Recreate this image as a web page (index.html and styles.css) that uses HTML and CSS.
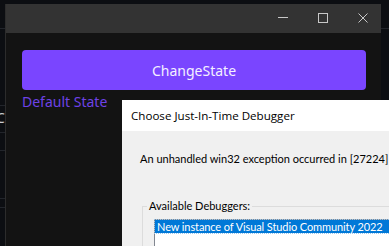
FILE: index.html
```html
<!DOCTYPE html>
<html>
<head>
  <meta charset="utf-8">
  <title>ChangeState</title>
  <link rel="stylesheet" href="styles.css">
</head>
<body>
  <div id="desktop">
    <div class="edge edge-left">
      <div class="rule r1"></div>
      <div class="rule r2"></div>
      <div class="edge-char">C</div>
      <div class="rule r3"></div>
      <div class="rule r4"></div>
      <div class="rule r5"></div>
      <div class="rule r6"></div>
    </div>
    <div id="app">
      <div class="titlebar">
        <svg class="ctl" width="46" height="29" viewBox="0 0 46 29"><path d="M28 13.5h10" stroke="#c8c8c8" stroke-width="1"/></svg>
        <svg class="ctl" width="40" height="29" viewBox="0 0 40 29"><rect x="22.5" y="9.5" width="9" height="9" fill="none" stroke="#c8c8c8" stroke-width="1"/></svg>
        <svg class="ctl" width="45" height="29" viewBox="0 0 45 29"><path d="M22.5 9.5l9 9M31.5 9.5l-9 9" stroke="#c8c8c8" stroke-width="1"/></svg>
      </div>
      <div class="content">
        <button class="primary">ChangeState</button>
        <div class="state">Default State</div>
      </div>
    </div>
    <div class="edge edge-right">
      <div class="rule r1"></div>
    </div>
  </div>

  <div id="jit">
    <div class="jit-title">Choose Just-In-Time Debugger</div>
    <div class="jit-body">
      <div class="jit-msg">An unhandled win32 exception occurred in [27224] <span class="proc">TestApp.exe</span></div>
      <fieldset class="group">
        <legend>Available Debuggers:</legend>
        <div class="listbox">
          <div class="item selected">New instance of Visual Studio Community 2022</div>
          <div class="item">&nbsp;</div>
        </div>
      </fieldset>
    </div>
  </div>
</body>
</html>
```

FILE: styles.css
```css
html, body {
  margin: 0;
  height: 100%;
  overflow: hidden;
}
body {
  background: #0c0e12;
  font-family: "Noto Sans", Arial, sans-serif;
}
#desktop {
  display: flex;
  height: 100%;
}
.edge {
  width: 5px;
  flex: none;
  overflow: hidden;
}
.edge-right {
  flex: 1;
}
.rule {
  height: 1px;
  background: #22252b;
}
.edge-left .r1 { margin-top: 28px; }
.edge-left .r2 { margin-top: 76px; }
.edge-char {
  margin-top: 4px;
  margin-left: -4px;
  color: #c9ccd2;
  font-size: 14px;
  line-height: 16px;
  height: 18px;
}
.edge-left .r3 { margin-top: 4px; }
.edge-left .r4 { margin-top: 17px; }
.edge-left .r5 { margin-top: 47px; }
.edge-left .r6 { margin-top: 8px; }
.edge-right .r1 { margin-top: 28px; }

#app {
  width: 375px;
  margin-top: 4px;
  border-left: 1px solid #2c2c2c;
  display: flex;
  flex-direction: column;
  background: #131313;
}
.titlebar {
  height: 29px;
  background: #333333;
  display: flex;
  justify-content: flex-end;
}
.ctl {
  display: block;
}
.content {
  padding: 17px 15px 0 16px;
}
.primary {
  display: block;
  width: 100%;
  height: 40px;
  border: none;
  border-radius: 4px;
  background: #7a45ff;
  color: #f4f0ff;
  font-family: "Noto Sans", Arial, sans-serif;
  font-size: 14px;
}
.state {
  margin-top: 2px;
  color: #6e42e6;
  font-size: 14px;
  line-height: 20px;
}

#jit {
  position: absolute;
  left: 122px;
  top: 100px;
  width: 320px;
  height: 200px;
  background: #f0f0f0;
  font-family: "Open Sans", Lato, Arial, sans-serif;
  color: #000;
}
.jit-title {
  height: 31px;
  line-height: 31px;
  padding-left: 9px;
  background: #ffffff;
  font-size: 11.6px;
  white-space: nowrap;
}
.jit-body {
  padding: 20px 0 0 18px;
  font-family: Lato, "Open Sans", Arial, sans-serif;
  font-size: 11px;
}
.jit-msg {
  line-height: 16px;
  white-space: nowrap;
}
.proc {
  color: #c78a00;
}
.group {
  margin: 31px 0 0 2px;
  padding: 5px 0 0 0;
  border: 1px solid #dcdcdc;
  border-right: none;
  height: 80px;
}
.group legend {
  padding: 0 2px;
  margin-left: 4px;
  line-height: 16px;
}
.listbox {
  margin-left: 11px;
  background: #ffffff;
  border: 1px solid #828790;
  border-right: none;
  height: 60px;
}
.item {
  line-height: 13px;
  padding-left: 2px;
  letter-spacing: -0.1px;
  white-space: nowrap;
}
.item.selected {
  background: #0078d7;
  color: #ffffff;
  outline: 1px dotted #99c9ef;
}
```
